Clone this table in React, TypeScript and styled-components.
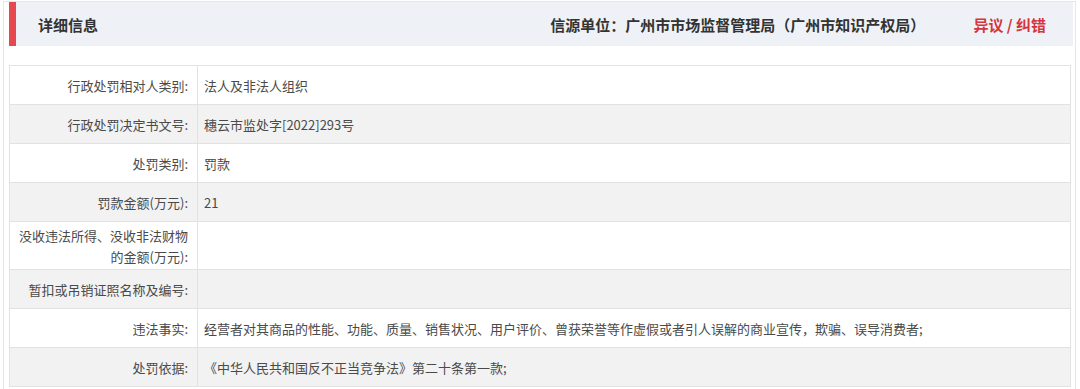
import styled, { createGlobalStyle } from 'styled-components'

const GlobalStyle = createGlobalStyle`
  html, body {
    margin: 0;
    padding: 0;
    background: #fff;
  }
  body {
    font-family: "Noto Sans CJK SC", "Noto Sans", sans-serif;
  }
`

// Outer panel with faint border
const Panel = styled.div`
  margin: 1px 0 0 3px;
  width: 1073px;
  box-sizing: border-box;
  border: 1px solid #e6e6e6;
  padding: 0 2px 20px 5px;
`

// Header bar with red accent
const Header = styled.div`
  height: 44px;
  box-sizing: border-box;
  background: #eef2f7;
  border-left: 7px solid #e5484f;
  display: flex;
  align-items: center;
  padding: 0 27px 0 22px;
  font-size: 15px;
  font-weight: bold;
  color: #333;
`

const Title = styled.div`
  flex: 1;
`

const Source = styled.div`
  color: #333;
`

const Objection = styled.span`
  margin-left: 48px;
  color: #d6353d;
  cursor: pointer;
`

const Table = styled.div`
  margin: 19px 2px 0 0;
  display: grid;
  grid-template-columns: 188px 1fr;
  border-top: 1px solid #e2e2e2;
  border-left: 1px solid #e2e2e2;
  font-size: 13px;
  color: #4a4a4a;
`

const Cell = styled.div<{ $shaded: boolean; $label?: boolean }>`
  min-height: 39px;
  box-sizing: border-box;
  border-right: 1px solid #e2e2e2;
  border-bottom: 1px solid #e2e2e2;
  background: ${p => (p.$shaded ? '#f2f2f2' : '#fff')};
  display: flex;
  align-items: center;
  justify-content: ${p => (p.$label ? 'flex-end' : 'flex-start')};
  text-align: ${p => (p.$label ? 'right' : 'left')};
  padding: ${p => (p.$label ? '3px 9px 2px 4px' : '3px 6px 2px 6px')};
  line-height: 21px;
`

const rows: { label: string; value: string }[] = [
  { label: '行政处罚相对人类别:', value: '法人及非法人组织' },
  { label: '行政处罚决定书文号:', value: '穗云市监处字[2022]293号' },
  { label: '处罚类别:', value: '罚款' },
  { label: '罚款金额(万元):', value: '21' },
  { label: '没收违法所得、没收非法财物的金额(万元):', value: '' },
  { label: '暂扣或吊销证照名称及编号:', value: '' },
  {
    label: '违法事实:',
    value: '经营者对其商品的性能、功能、质量、销售状况、用户评价、曾获荣誉等作虚假或者引人误解的商业宣传，欺骗、误导消费者;',
  },
  { label: '处罚依据:', value: '《中华人民共和国反不正当竞争法》第二十条第一款;' },
]

const App = () => {
  return (
    <>
      <GlobalStyle />
      <Panel>
        <Header>
          <Title>详细信息</Title>
          <Source>信源单位：广州市市场监督管理局（广州市知识产权局）</Source>
          <Objection>异议 / 纠错</Objection>
        </Header>
        <Table>
          {rows.flatMap((row, i) => [
            <Cell key={`l${i}`} $shaded={i % 2 === 1} $label>
              {row.label}
            </Cell>,
            <Cell key={`v${i}`} $shaded={i % 2 === 1}>
              {row.value}
            </Cell>,
          ])}
        </Table>
      </Panel>
    </>
  )
}

export default App
